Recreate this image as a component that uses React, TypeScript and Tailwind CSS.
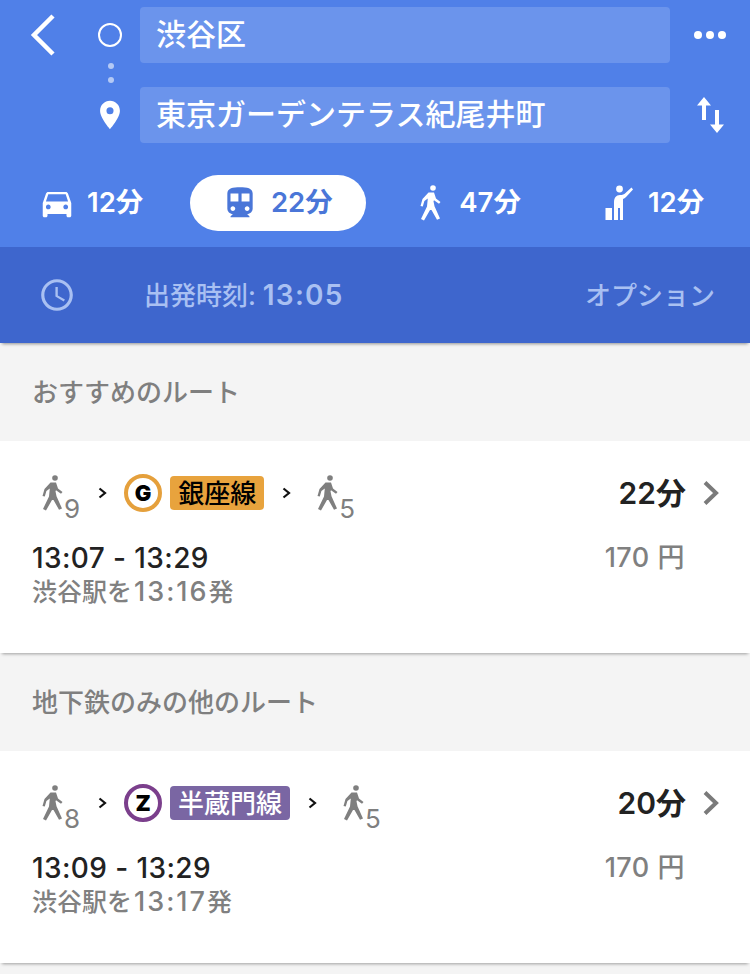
import { MdAccessTime, MdDirectionsCar, MdDirectionsSubway, MdPlace } from "react-icons/md";

const font = "font-['Inter','Noto_Sans_CJK_JP',sans-serif]";

function Chevron() {
  return (
    <svg width="9" height="12" viewBox="0 0 9 12" className="shrink-0">
      <path d="M1.500 1.500 7 6l-5.500 4.500" fill="none" stroke="#111" strokeWidth="2.200" />
    </svg>
  );
}

function WalkIcon() {
  return (
    <svg width="24" height="36" viewBox="0 0 24 36" fill="currentColor" className="shrink-0">
      <circle cx="15" cy="3" r="2.800" />
      <path d="M10.500 7.500h5.500l2 6 4.500 3.500-1.500 1.800-5-3.600-.5 1 1 5 5.500 12.300-3 1.200L13.500 25 12 25 6 35.500 3 34l6-12.500.8-8-3.400 2.500-1.600 5.500L2.500 21l2-7z" />
    </svg>
  );
}

function HailIcon() {
  return (
    <svg width="30" height="36" viewBox="0 0 30 36" fill="#fff" className="shrink-0">
      <circle cx="14.500" cy="4" r="3.400" />
      <path d="M9 35V17c0-4 2-7 6-7 2.500 0 4-.5 5.500-2l6-5.500 1.500 2-6.500 7c-1 1-2 2-3.500 2.500V35h-3V23h-2v12z" />
      <rect x="0.500" y="23" width="6.500" height="12" />
    </svg>
  );
}

function SwapIcon() {
  return (
    <svg width="27" height="36" viewBox="0 0 27 36" fill="#fff" className="shrink-0">
      <path d="M7 0l7 8.500H9V23H5V8.500H0z" />
      <path d="M20 36l-7-8.500h5V13h4v14.500h5z" />
    </svg>
  );
}

function Mode({ icon, label, className }: { icon: React.ReactNode; label: string; className: string }) {
  return (
    <div className={"flex items-center text-[27.500px] font-semibold " + className}>
      {icon}
      <span>{label}</span>
    </div>
  );
}

function Walk({ n }: { n: number }) {
  return (
    <div className="flex items-start text-[#7f7f7f] shrink-0 h-[36px]">
      <WalkIcon />
      <span className="mt-[21px] text-[26px] leading-[26px]">{n}</span>
    </div>
  );
}

function RouteCard(props: { walkA: number; letter: string; ring: string; badge: string; badgeClass: string; walkB: number; mins: string; time: string; noteTime: string }) {
  return (
    <div className="bg-white h-[212px] shadow-[0_3px_3px_-2px_rgba(0,0,0,0.35)] relative px-[32px] pt-[33px]">
      <div className="flex items-center h-[38px]">
        <div className="ml-[8px]"><Walk n={props.walkA} /></div>
        <div className="ml-[18px]"><Chevron /></div>
        <div className={"ml-[17px] w-[38px] h-[38px] rounded-full border-[4px] flex items-center justify-center text-[22px] font-black text-black bg-white " + props.ring}>
          {props.letter}
        </div>
        <div className={"ml-[8px] h-[34px] px-[8px] rounded flex items-center text-[26px] font-medium " + props.badgeClass}>
          {props.badge}
        </div>
        <div className="ml-[18px]"><Chevron /></div>
        <div className="ml-[24px]"><Walk n={props.walkB} /></div>
        <div className="ml-auto text-[30px] font-semibold text-[#222]">{props.mins}</div>
        <svg width="18" height="26" viewBox="0 0 18 26" className="ml-[16px] mr-[-2px]">
          <path d="M3 2.500 14 13 3 23.500" fill="none" stroke="#7a7a7a" strokeWidth="4" />
        </svg>
      </div>
      <div className="flex justify-between items-center mt-[30px] pr-[33px]">
        <div className="text-[28px] leading-[32px] font-medium tracking-[0.4px] text-[#222]">{props.time}</div>
        <div className="text-[27px] leading-[32px] font-medium tracking-[0.5px] text-[#808080]">170 円</div>
      </div>
      <div className="text-[25px] leading-[30px] font-medium text-[#808080] mt-[3px] flex items-baseline">
        渋谷駅を<span className="ml-[2px] text-[27px] tracking-[2px]">{props.noteTime}</span>発
      </div>
    </div>
  );
}

function SectionTitle({ children }: { children: string }) {
  return (
    <div className="h-[98px] flex items-center px-[32px] text-[26px] font-medium text-[#7f7f7f]">{children}</div>
  );
}

export default function App() {
  return (
    <div className={"w-[750px] h-[974px] overflow-hidden bg-[#f4f4f4] " + font}>
      <header className="bg-[#5080e8] h-[247px] pt-[7px] text-white">
        <div className="flex items-center h-14">
          <svg width="30" height="44" viewBox="0 0 30 44" className="ml-[28px] shrink-0">
            <path d="M25 3 6 22l19 19" fill="none" stroke="#fff" strokeWidth="4.500" />
          </svg>
          <div className="ml-[40px] w-6 h-6 rounded-full border-2 border-white shrink-0" />
          <div className="ml-[18px] w-[530px] h-14 bg-[#6b94ec] rounded flex items-center px-[16px] pb-[2px] text-[30px] font-medium">渋谷区</div>
          <div className="ml-[24px] flex gap-[4px]">
            <span className="w-2 h-2 rounded-full bg-white" />
            <span className="w-2 h-2 rounded-full bg-white" />
            <span className="w-2 h-2 rounded-full bg-white" />
          </div>
        </div>
        <div className="h-6 flex flex-col gap-2 pl-[108px]">
          <span className="w-[6px] h-[6px] rounded-full bg-[#b4c9f5]" />
          <span className="w-[6px] h-[6px] rounded-full bg-[#b4c9f5]" />
        </div>
        <div className="flex items-center h-14">
          <MdPlace size={34} className="ml-[93px] shrink-0" />
          <div className="ml-[13px] w-[530px] h-14 bg-[#6b94ec] rounded flex items-center px-[16px] pb-[2px] text-[30px] font-medium whitespace-nowrap">東京ガーデンテラス紀尾井町</div>
          <div className="ml-[27px]"><SwapIcon /></div>
        </div>
        <div className="flex items-center h-14 mt-8 pl-[42px]">
          <Mode icon={<MdDirectionsCar size={38} className="-mx-1 mr-[11px]" />} label="12分" className="" />
          <div className="ml-[47px] w-[176px] h-14 rounded-full bg-white text-[#4a76d8] flex items-center justify-center pr-[3px]">
            <Mode icon={<MdDirectionsSubway size={38} className="mr-[12px]" />} label="22分" className="" />
          </div>
          <Mode icon={<WalkIcon />} label="47分" className="ml-[52px] gap-[17px]" />
          <Mode icon={<HailIcon />} label="12分" className="ml-[84px] gap-[13px]" />
        </div>
      </header>

      <div className="bg-[#3e66cd] h-[96px] flex items-center text-[#a9c0f2] shadow-[0_3px_3px_-2px_rgba(0,0,0,0.4)] relative text-[26px] font-medium">
        <MdAccessTime size={38} className="ml-[38px] shrink-0" />
        <span className="ml-[68px]">出発時刻: <span className="text-[28px] font-semibold tracking-[1.2px]">13:05</span></span>
        <span className="ml-auto mr-[35px]">オプション</span>
      </div>

      <SectionTitle>おすすめのルート</SectionTitle>
      <RouteCard walkA={9} letter="G" ring="border-[#e5a03c]" badge="銀座線" badgeClass="bg-[#e8a33d] text-black" walkB={5} mins="22分" time="13:07 - 13:29" noteTime="13:16" />
      <SectionTitle>地下鉄のみの他のルート</SectionTitle>
      <RouteCard walkA={8} letter="Z" ring="border-[#7b3f8c]" badge="半蔵門線" badgeClass="bg-[#7a66a3] text-white" walkB={5} mins="20分" time="13:09 - 13:29" noteTime="13:17" />
    </div>
  );
}
